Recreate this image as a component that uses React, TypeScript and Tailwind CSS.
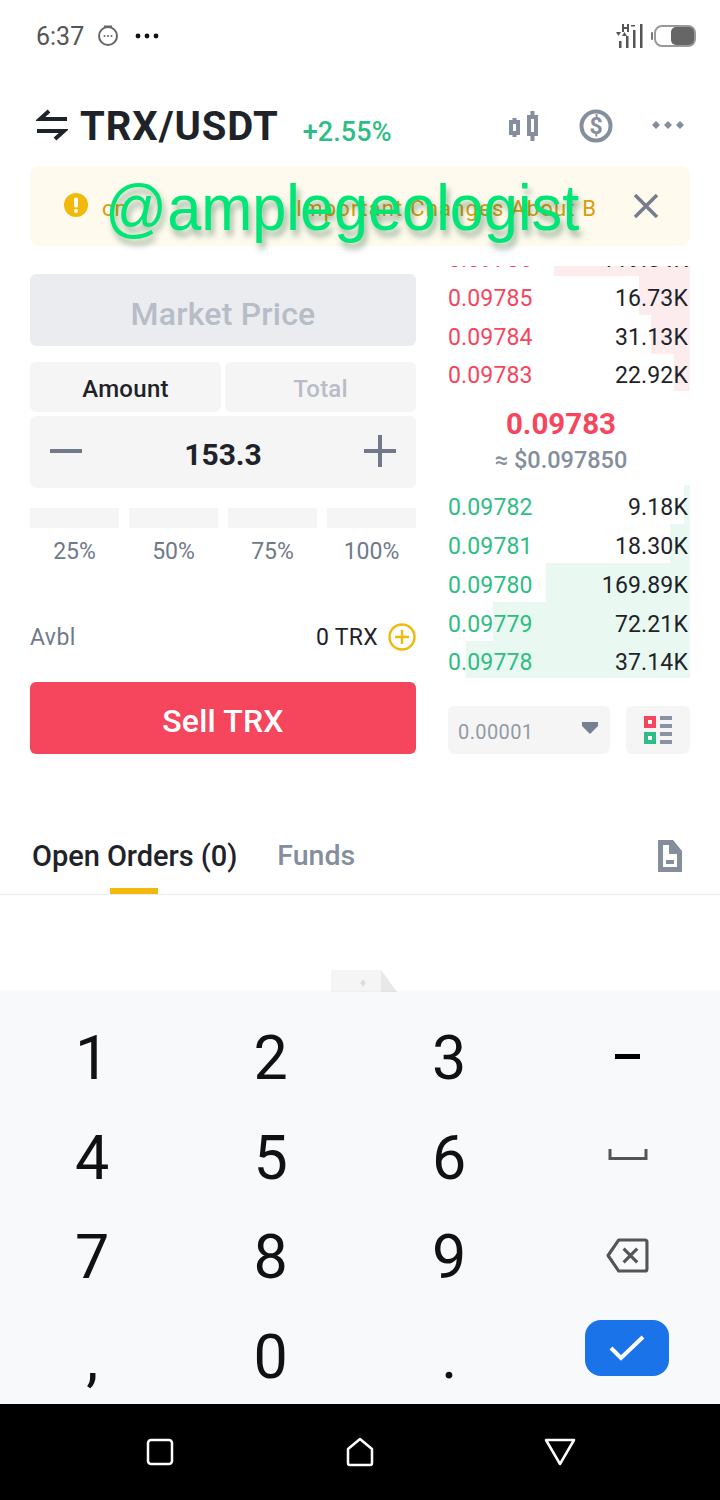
import React from "react";

const sans = "font-['Roboto','Noto_Sans',sans-serif]";

function Row({ price, qty, bar, up, short }: { price: string; qty: string; bar: number; up?: boolean; short?: boolean }) {
  return (
    <div className={`relative flex shrink-0 items-center justify-between text-[23px] leading-none tracking-[0.15px] ${short ? "h-[37px] pt-[6px]" : "h-[39px] pt-[5px]"}`}>
      <div className={`absolute top-0 bottom-0 right-0 ${up ? "bg-[#e9f8f1]" : "bg-[#fdeced]"}`} style={{ width: bar }} />
      <span className={`relative ${up ? "text-[#2ebd85]" : "text-[#f6465d]"}`}>{price}</span>
      <span className="relative text-[#1e2329] pr-[2px]">{qty}</span>
    </div>
  );
}

function Key({ children }: { children: React.ReactNode }) {
  return <div className="flex items-center justify-center h-[99.5px] text-[61px] leading-none text-[#111]">{children}</div>;
}

export default function App() {
  return (
    <div className={`relative w-[720px] h-[1500px] bg-white overflow-hidden flex flex-col ${sans}`}>
      {/* status bar */}
      <div className="h-[72px] shrink-0 flex items-center justify-between pl-[36px] pr-[24px]">
        <div className="flex items-center">
          <span className="text-[25px] text-[#555] leading-none">6:37</span>
          <svg width="22" height="22" viewBox="0 0 22 22" className="ml-[13px]">
            <circle cx="11" cy="11" r="9" fill="none" stroke="#666" strokeWidth="2" />
            <path d="M7 1.5h8" stroke="#666" strokeWidth="2" />
            <circle cx="7.500" cy="11" r="1" fill="#666" /><circle cx="11" cy="11" r="1" fill="#666" /><circle cx="14.500" cy="11" r="1" fill="#666" />
          </svg>
          <svg width="24" height="6" viewBox="0 0 24 6" className="ml-[16px]">
            <circle cx="3" cy="3" r="2.400" fill="#111" /><circle cx="12" cy="3" r="2.400" fill="#111" /><circle cx="21" cy="3" r="2.400" fill="#111" />
          </svg>
        </div>
        <div className="flex items-center">
          <svg width="28" height="30" viewBox="0 0 28 30" fill="#555" className="-mr-[2px]">
            <rect x="3" y="20" width="2.500" height="7" /><rect x="10" y="15" width="2.500" height="12" /><rect x="17" y="9" width="2.500" height="18" /><rect x="24" y="3" width="2.500" height="24" />
            <path d="M0 11h5l-2.500 4zM6 15h5L8.500 11zM6 3h2v3h3V3h2v8h-2V8H8v3H6zM15 4h4v1.500h-4z" />
          </svg>
          <svg width="46" height="30" viewBox="0 0 46 30" className="ml-[8px]">
            <rect x="1" y="11" width="2" height="8" rx="1" fill="#777" />
            <rect x="5" y="5" width="40" height="20" rx="7" fill="#fff" stroke="#999" strokeWidth="2" />
            <rect x="21" y="6" width="23" height="18" rx="5" fill="#666" />
          </svg>
        </div>
      </div>

      {/* header */}
      <div className="h-[94px] shrink-0 flex items-start pl-[36px] pr-[36px] pt-[30px]">
        <svg width="32" height="32" viewBox="0 0 32 32" className="mt-[7px]">
          <path d="M31 10H4l9-8M1 22h27l-9 8" fill="none" stroke="#1e2329" strokeWidth="4" />
        </svg>
        <span className="ml-[12px] mt-[2px] text-[40px] leading-[46px] font-bold text-[#1e2329] tracking-[0.95px]">TRX/USDT</span>
        <span className="ml-[24px] mt-[14px] text-[27px] leading-[32px] font-medium text-[#2ebd85] tracking-[0.1px]">+2.55%</span>
        <div className="ml-auto flex items-center mt-[7px]">
          <svg width="30" height="30" viewBox="0 0 30 30" fill="none" stroke="#848e9c" strokeWidth="4">
            <rect x="2" y="11" width="7" height="11" /><path d="M5.500 7v4M5.500 22v4" />
            <rect x="20" y="6" width="7" height="17" /><path d="M23.500 0v6M23.500 23v7" />
          </svg>
          <svg width="34" height="34" viewBox="0 0 34 34" className="ml-[40px]">
            <circle cx="17" cy="17" r="14.500" fill="none" stroke="#848e9c" strokeWidth="4" />
            <text x="17" y="25" textAnchor="middle" fontSize="23" fontWeight="700" fill="#848e9c" fontFamily="Roboto">$</text>
          </svg>
          <svg width="32" height="8" viewBox="0 0 32 8" className="ml-[39px] -mt-[2px]" fill="#848e9c">
            <path d="M4 0l4 4-4 4-4-4zM16 0l4 4-4 4-4-4zM28 0l4 4-4 4-4-4z" />
          </svg>
        </div>
      </div>

      {/* notice */}
      <div className="mx-[30px] h-[80px] shrink-0 rounded-[8px] bg-[#fefbee] flex items-center pl-[34px] pr-[32px] relative">
        <svg width="24" height="24" viewBox="0 0 24 24" className="-mt-[2px]">
          <circle cx="12" cy="12" r="12" fill="#f0b90b" />
          <rect x="10" y="4.500" width="4" height="10" rx="1.500" fill="#fefbee" />
          <circle cx="12" cy="18" r="2" fill="#fefbee" />
        </svg>
        <span className="ml-[14px] pt-[6px] text-[22px] leading-none text-[#d89e0b] w-[194px] overflow-hidden">on</span>
        <span className="pt-[6px] text-[22px] leading-none text-[#d89e0b] whitespace-nowrap w-[302px] tracking-[1.2px]">Important Changes About B</span>
        <svg width="26" height="26" viewBox="0 0 26 26" className="ml-auto -mr-[1px]" fill="none" stroke="#767c8c" strokeWidth="3.500">
          <path d="M2 2l22 22M24 2L2 24" />
        </svg>
      </div>

      {/* trade panel */}
      <div className="flex shrink-0 pl-[30px] pr-[30px] h-[574px]">
        <div className="w-[386px] shrink-0 flex flex-col pt-[28px]">
          <div className="h-[72px] pt-[7px] rounded-[6px] bg-[#eaecef] flex items-center justify-center text-[32px] tracking-[0.2px] font-medium text-[#b7bdc6]">Market Price</div>
          <div className="mt-[16px] flex gap-[4px]">
            <div className="flex-1 h-[50px] pt-[4px] rounded-[6px] bg-[#f5f5f5] flex items-center justify-center text-[24px] tracking-[0.3px] font-medium text-[#1e2329]">Amount</div>
            <div className="flex-1 h-[50px] pt-[4px] rounded-[6px] bg-[#f5f5f5] flex items-center justify-center text-[24px] tracking-[0.2px] font-medium text-[#b7bdc6]">Total</div>
          </div>
          <div className="mt-[4px] h-[72px] rounded-[6px] bg-[#f5f5f5] flex items-center justify-between px-[20px]">
            <svg width="32" height="32" viewBox="0 0 32 32" className="-mt-[2px]"><rect y="14" width="32" height="4" fill="#707a8a" /></svg>
            <span className="text-[30px] font-bold text-[#1e2329] mt-[4px]">153.3</span>
            <svg width="32" height="32" viewBox="0 0 32 32" className="-mt-[2px]"><path d="M0 14h14V0h4v14h14v4H18v14h-4V18H0z" fill="#707a8a" /></svg>
          </div>
          <div className="mt-[20px] grid grid-cols-4 gap-[10px]">
            {["25%", "50%", "75%", "100%"].map((p) => (
              <div key={p} className="flex flex-col items-center">
                <div className="h-[20px] w-full bg-[#f5f5f5]" />
                <span className="mt-[12px] text-[23px] leading-[24px] text-[#707a8a]">{p}</span>
              </div>
            ))}
          </div>
          <div className="mt-[56px] h-[36px] flex items-center justify-between">
            <span className="text-[23px] tracking-[0.4px] text-[#707a8a]">Avbl</span>
            <div className="flex items-center">
              <span className="text-[23px] tracking-[0.3px] text-[#1e2329]">0 TRX</span>
              <svg width="28" height="28" viewBox="0 0 28 28" className="ml-[10px] -mt-[2px]" fill="none" stroke="#f0b90b" strokeWidth="2.400">
                <circle cx="14" cy="14" r="12.500" /><path d="M7 14h14M14 7v14" />
              </svg>
            </div>
          </div>
          <div className="mt-[26px] h-[72px] pt-[6px] rounded-[6px] bg-[#f6465d] flex items-center justify-center text-[32px] tracking-[0.2px] font-medium text-white">Sell TRX</div>
        </div>

        <div className="ml-[32px] flex-1 flex flex-col pt-[20px]">
          <div className="h-[10px] overflow-hidden flex flex-col justify-end">
            <Row price="0.09786" qty="119.54K" bar={136} />
          </div>
          <Row price="0.09785" qty="16.73K" bar={51} />
          <Row price="0.09784" qty="31.13K" bar={39} />
          <Row price="0.09783" qty="22.92K" bar={16} short />
          <div className="h-[94px] flex flex-col items-center justify-center pr-[16px] pt-[3px]">
            <span className="text-[29.500px] leading-[38px] font-bold text-[#f6465d]">0.09783</span>
            <span className="text-[23.500px] leading-[30px] mt-[2px] font-medium text-[#848e9c]">≈ $0.097850</span>
          </div>
          <Row price="0.09782" qty="9.18K" bar={6} up />
          <Row price="0.09781" qty="18.30K" bar={20} up />
          <Row price="0.09780" qty="169.89K" bar={144} up />
          <Row price="0.09779" qty="72.21K" bar={197} up />
          <Row price="0.09778" qty="37.14K" bar={224} up short />
          <div className="mt-[28px] flex justify-between">
            <div className="w-[162px] h-[48px] rounded-[6px] bg-[#f5f5f5] flex items-center justify-between pl-[10px] pr-[12px]">
              <span className="text-[20px] pt-[3px] text-[#929aa5] tracking-[0.4px]">0.00001</span>
              <svg width="16" height="12" viewBox="0 0 16 12" className="-mt-[4px]"><path d="M0 0h16v4l-8 8-8-8z" fill="#76808f" /></svg>
            </div>
            <div className="w-[64px] h-[48px] rounded-[6px] bg-[#f5f5f5] flex items-center justify-center">
              <svg width="28" height="28" viewBox="0 0 28 28">
                <rect x="0" y="0" width="12" height="12" fill="#f6465d" /><rect x="4" y="4" width="4" height="4" fill="#fff" />
                <rect x="0" y="16" width="12" height="12" fill="#2ebd85" /><rect x="4" y="20" width="4" height="4" fill="#fff" />
                <path d="M16 0h12v4H16zM16 8h12v4H16zM16 16h12v4H16zM16 24h12v4H16z" fill="#8a93a3" />
              </svg>
            </div>
          </div>
        </div>
      </div>

      {/* tabs */}
      <div className="h-[75px] shrink-0 border-b border-[#eaecef] flex items-start pl-[32px] pr-[38px]">
        <div className="relative h-[74px] pt-[16px] mr-[40px]">
          <span className="text-[29px] leading-[40px] tracking-[-0.05px] font-medium text-[#1e2329]">Open Orders (0)</span>
          <div className="absolute bottom-0 left-[78px] w-[48px] h-[6px] bg-[#f0b90b]" />
        </div>
        <span className="pt-[16px] text-[28.500px] leading-[40px] font-medium text-[#848e9c]">Funds</span>
        <svg width="24" height="32" viewBox="0 0 24 32" className="ml-auto mt-[20px]">
          <path fillRule="evenodd" d="M0 0h15l9 11v21H0zM5 5v22h14V14h-8V5zM8 20h8v4H8z" fill="#848e9c" />
        </svg>
      </div>

      {/* empty state peeking above the keyboard */}
      <div className="h-[97px] shrink-0 overflow-hidden pt-[75px] pl-[331px]">
        <svg width="74" height="22" viewBox="0 0 74 22">
          <rect width="50" height="22" fill="#f5f5f5" />
          <path d="M50 0l24 33H50z" fill="#e6e8ea" />
          <path d="M32 13l3 4-3 4-3-4z" fill="#dddfe2" transform="translate(0,-4)" />
        </svg>
      </div>

      {/* keyboard */}
      <div className="h-[412px] shrink-0 bg-[#f8f9fb] shadow-[0_-1px_2px_rgba(0,0,0,0.03)] px-[3px] pt-[15px]">
        <div className="grid grid-cols-4 relative">
          <Key><span className="relative top-[2px]">1</span></Key><Key><span className="relative top-[2px]">2</span></Key><Key><span className="relative top-[2px]">3</span></Key>
          <Key><span className="block w-[25px] h-[5px] bg-black" /></Key>
          <Key><span className="relative top-[2px]">4</span></Key><Key><span className="relative top-[2px]">5</span></Key><Key><span className="relative top-[2px]">6</span></Key>
          <Key>
            <svg width="40" height="12" viewBox="0 0 40 12" className="-mt-[2px]" fill="none" stroke="#555" strokeWidth="3"><path d="M2 0v9.500h36V0" /></svg>
          </Key>
          <Key><span className="relative top-[2px]">7</span></Key><Key><span className="relative top-[2px]">8</span></Key><Key><span className="relative top-[2px]">9</span></Key>
          <Key>
            <svg width="43" height="35" viewBox="0 0 44 36" className="mr-[1px]" fill="none" stroke="#555" strokeWidth="3.200" strokeLinejoin="round">
              <path d="M13 2h27a2 2 0 0 1 2 2v28a2 2 0 0 1-2 2H13L2 18z" />
              <path d="M18 11l14 14M32 11L18 25" />
            </svg>
          </Key>
          <Key><span className="relative top-[4px]">,</span></Key>
          <Key><span className="relative top-[2px]">0</span></Key>
          <Key><span className="relative top-[2px]">.</span></Key>
          <Key>
            <div className="w-[84px] h-[56px] -mt-[14px] -ml-[1px] rounded-[16px] bg-[#1a73e9] flex items-center justify-center">
              <svg width="36" height="28" viewBox="0 0 36 28" fill="none" stroke="#fff" strokeWidth="4"><path d="M2 14l10 10L34 3" /></svg>
            </div>
          </Key>
        </div>
      </div>

      {/* nav */}
      <div className="h-[96px] shrink-0 bg-black grid grid-cols-3 place-items-center px-[60px]">
        <svg width="28" height="28" viewBox="0 0 28 28" fill="none" stroke="#fff" strokeWidth="2.500"><rect x="2" y="2" width="24" height="24" rx="3" /></svg>
        <svg width="28" height="30" viewBox="0 0 28 30" fill="none" stroke="#fff" strokeWidth="2.500" strokeLinejoin="round"><path d="M2 12L14 2l12 10v14a2 2 0 0 1-2 2H4a2 2 0 0 1-2-2z" /></svg>
        <svg width="32" height="28" viewBox="0 0 32 28" fill="none" stroke="#fff" strokeWidth="2.500" strokeLinejoin="round"><path d="M2 2h28L16 26z" /></svg>
      </div>

      {/* watermark */}
      <div className="absolute left-[105px] top-[170px] text-[64px] leading-[76px] whitespace-nowrap origin-left scale-x-[0.957] text-[#00e676] font-['Liberation_Sans',sans-serif] [text-shadow:3px_6px_6px_rgba(0,70,30,0.4)]">@amplegeologist</div>
    </div>
  );
}
